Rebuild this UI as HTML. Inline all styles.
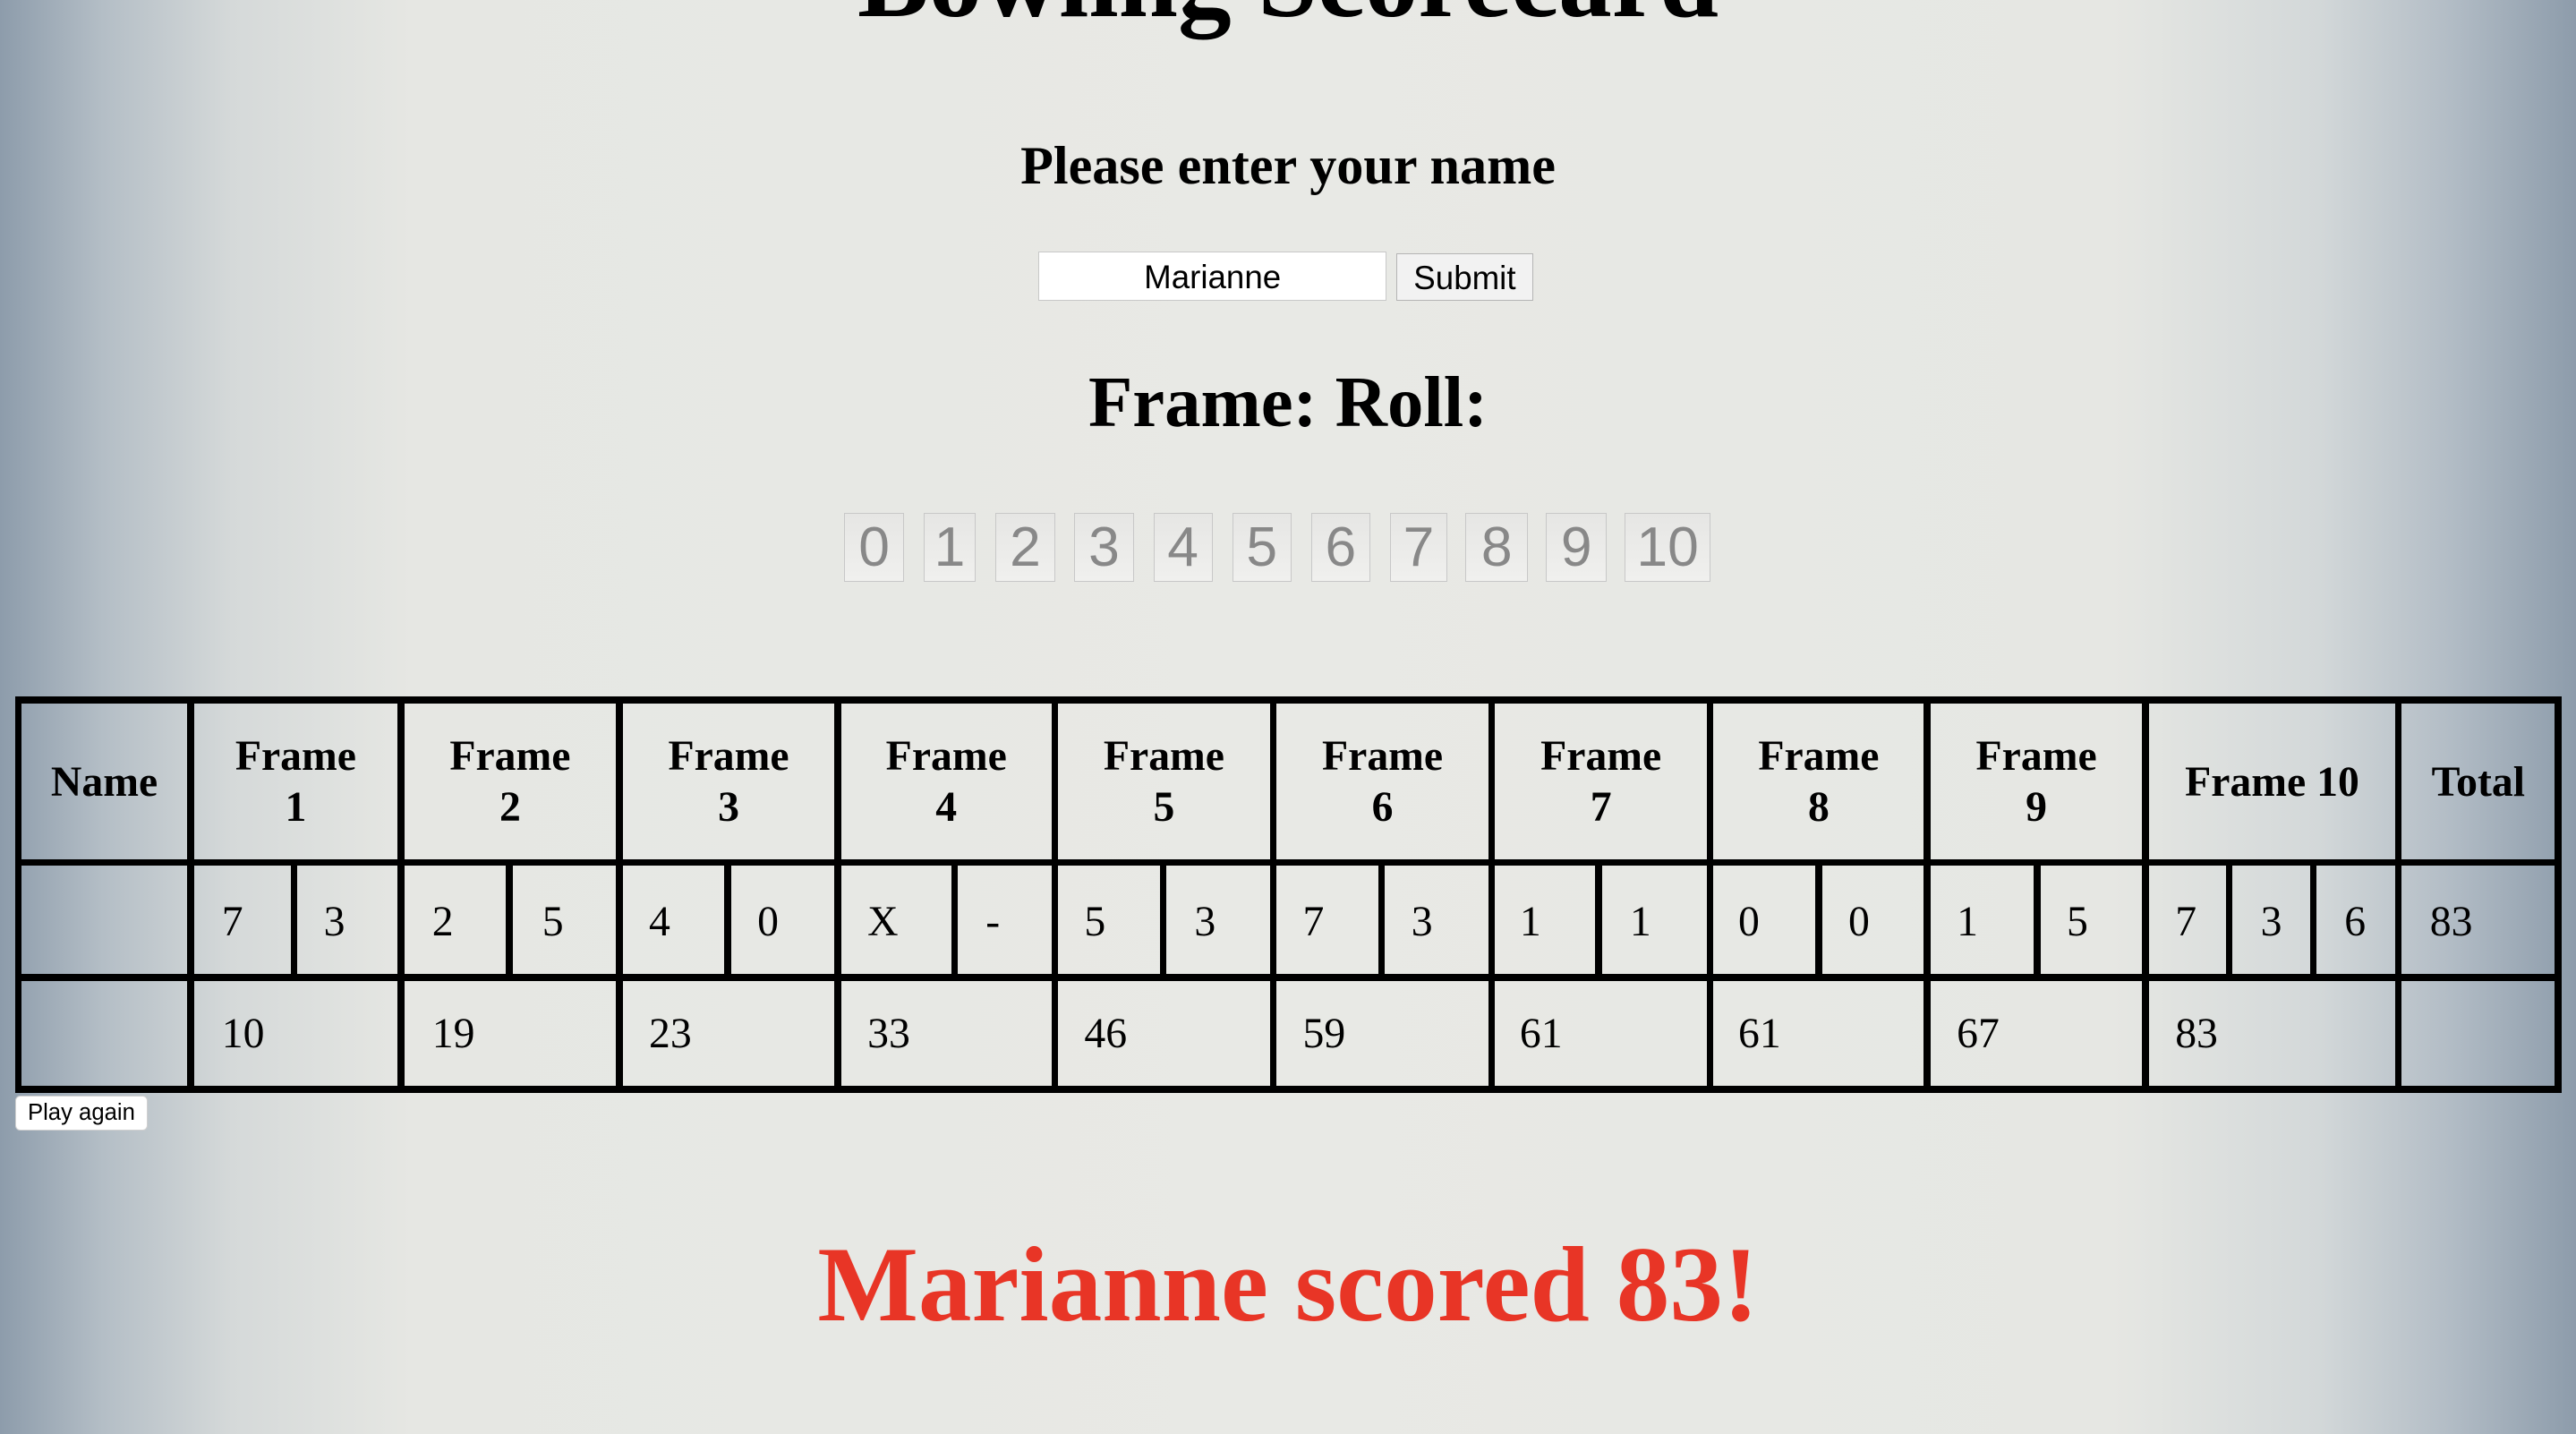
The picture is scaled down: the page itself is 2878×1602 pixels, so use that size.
<!DOCTYPE html>
<html><head><meta charset="utf-8"><style>
html,body{margin:0;padding:0;width:2878px;height:1602px;overflow:hidden}
body{background:
 linear-gradient(90deg,#8d9cab 0%,#b4bec6 4%,#d5d9d9 9%,#e6e7e3 16%,#e8e9e5 50%,#e6e7e3 82%,#d3d8d9 90%,#b3bdc6 95%,#8d9cab 100%);}
#w{zoom:1.8355;width:1568px;height:873px;position:relative;font-family:"Liberation Serif",serif;color:#000}
.a{position:absolute;white-space:nowrap}
.c{position:absolute;left:0;width:1568px;text-align:center;white-space:nowrap}
.h{position:absolute;background:#000}
.nb{position:absolute;top:312px;height:41px;border:1px solid #c8c8c8;background:linear-gradient(#e6e6e4,#f0f0ee);color:#888;font-family:"Liberation Sans",sans-serif;font-size:34px;line-height:41px;text-align:center}
.th{position:absolute;font-weight:bold;font-size:26px;line-height:31px;text-align:center}
.t{position:absolute;font-size:26px;line-height:30px}
</style></head><body><div id="w">
<div class="c" style="top:-48px;font-size:65px;font-weight:bold;line-height:72px">Bowling Scorecard</div>
<div class="c" style="top:82px;font-size:32.8px;font-weight:bold;line-height:38px">Please enter your name</div>
<div class="a" style="left:632px;top:153px;width:211px;height:29px;background:#fff;border:1px solid #c8c8c8;font-family:'Liberation Sans',sans-serif;font-size:20px;line-height:30px;text-align:center">Marianne</div>
<div class="a" style="left:850px;top:154px;width:82px;height:28px;background:#f2f2f2;border:1px solid #b4b4b4;font-family:'Liberation Sans',sans-serif;font-size:20px;line-height:29px;text-align:center">Submit</div>
<div class="c" style="top:219px;font-size:44px;font-weight:bold;line-height:52px">Frame: Roll:</div>
<div class="nb" style="left:514px;width:35px">0</div>
<div class="nb" style="left:562px;width:31px">1</div>
<div class="nb" style="left:606px;width:35px">2</div>
<div class="nb" style="left:654px;width:35px">3</div>
<div class="nb" style="left:702px;width:35px">4</div>
<div class="nb" style="left:750px;width:35px">5</div>
<div class="nb" style="left:798px;width:35px">6</div>
<div class="nb" style="left:846px;width:34px">7</div>
<div class="nb" style="left:892px;width:37px">8</div>
<div class="nb" style="left:941px;width:36px">9</div>
<div class="nb" style="left:989px;width:51px">10</div>

<div class="h" style="left:9px;top:424px;width:1550px;height:4px"></div>
<div class="h" style="left:9px;top:523px;width:1550px;height:4px"></div>
<div class="h" style="left:9px;top:593px;width:1550px;height:4px"></div>
<div class="h" style="left:9px;top:661px;width:1550px;height:4px"></div>
<div class="h" style="left:9px;top:424px;width:4px;height:241px"></div>
<div class="h" style="left:114px;top:424px;width:4px;height:241px"></div>
<div class="h" style="left:242px;top:424px;width:4px;height:241px"></div>
<div class="h" style="left:375px;top:424px;width:4px;height:241px"></div>
<div class="h" style="left:508px;top:424px;width:4px;height:241px"></div>
<div class="h" style="left:640px;top:424px;width:4px;height:241px"></div>
<div class="h" style="left:773px;top:424px;width:4px;height:241px"></div>
<div class="h" style="left:906px;top:424px;width:4px;height:241px"></div>
<div class="h" style="left:1039px;top:424px;width:4px;height:241px"></div>
<div class="h" style="left:1171px;top:424px;width:4px;height:241px"></div>
<div class="h" style="left:1304px;top:424px;width:4px;height:241px"></div>
<div class="h" style="left:1458px;top:424px;width:4px;height:241px"></div>
<div class="h" style="left:1555px;top:424px;width:4px;height:241px"></div>
<div class="h" style="left:177px;top:524px;width:4px;height:72px"></div>
<div class="h" style="left:308px;top:524px;width:4px;height:72px"></div>
<div class="h" style="left:441px;top:524px;width:4px;height:72px"></div>
<div class="h" style="left:579px;top:524px;width:4px;height:72px"></div>
<div class="h" style="left:706px;top:524px;width:4px;height:72px"></div>
<div class="h" style="left:839px;top:524px;width:4px;height:72px"></div>
<div class="h" style="left:971px;top:524px;width:4px;height:72px"></div>
<div class="h" style="left:1105px;top:524px;width:4px;height:72px"></div>
<div class="h" style="left:1238px;top:524px;width:4px;height:72px"></div>
<div class="h" style="left:1355px;top:524px;width:4px;height:72px"></div>
<div class="h" style="left:1406px;top:524px;width:4px;height:72px"></div>

<div class="th" style="left:13px;width:101px;top:461px">Name</div>
<div class="th" style="left:118px;width:124px;top:445px">Frame<br>1</div>
<div class="th" style="left:246px;width:129px;top:445px">Frame<br>2</div>
<div class="th" style="left:379px;width:129px;top:445px">Frame<br>3</div>
<div class="th" style="left:512px;width:128px;top:445px">Frame<br>4</div>
<div class="th" style="left:644px;width:129px;top:445px">Frame<br>5</div>
<div class="th" style="left:777px;width:129px;top:445px">Frame<br>6</div>
<div class="th" style="left:910px;width:129px;top:445px">Frame<br>7</div>
<div class="th" style="left:1043px;width:128px;top:445px">Frame<br>8</div>
<div class="th" style="left:1175px;width:129px;top:445px">Frame<br>9</div>
<div class="th" style="left:1308px;width:150px;top:461px">Frame 10</div>
<div class="th" style="left:1462px;width:93px;top:461px">Total</div>

<div class="t" style="left:135px;top:546px">7</div>
<div class="t" style="left:197px;top:546px">3</div>
<div class="t" style="left:263px;top:546px">2</div>
<div class="t" style="left:330px;top:546px">5</div>
<div class="t" style="left:395px;top:546px">4</div>
<div class="t" style="left:461px;top:546px">0</div>
<div class="t" style="left:528px;top:546px">X</div>
<div class="t" style="left:600px;top:546px">-</div>
<div class="t" style="left:660px;top:546px">5</div>
<div class="t" style="left:727px;top:546px">3</div>
<div class="t" style="left:793px;top:546px">7</div>
<div class="t" style="left:859px;top:546px">3</div>
<div class="t" style="left:925px;top:546px">1</div>
<div class="t" style="left:992px;top:546px">1</div>
<div class="t" style="left:1058px;top:546px">0</div>
<div class="t" style="left:1125px;top:546px">0</div>
<div class="t" style="left:1191px;top:546px">1</div>
<div class="t" style="left:1258px;top:546px">5</div>
<div class="t" style="left:1324px;top:546px">7</div>
<div class="t" style="left:1376px;top:546px">3</div>
<div class="t" style="left:1427px;top:546px">6</div>
<div class="t" style="left:1479px;top:546px">83</div>

<div class="t" style="left:135px;top:614px">10</div>
<div class="t" style="left:263px;top:614px">19</div>
<div class="t" style="left:395px;top:614px">23</div>
<div class="t" style="left:528px;top:614px">33</div>
<div class="t" style="left:660px;top:614px">46</div>
<div class="t" style="left:793px;top:614px">59</div>
<div class="t" style="left:925px;top:614px">61</div>
<div class="t" style="left:1058px;top:614px">61</div>
<div class="t" style="left:1191px;top:614px">67</div>
<div class="t" style="left:1324px;top:614px">83</div>

<div class="a" style="left:9px;top:667px;width:80px;height:20px;background:#fff;border:1px solid #d0d0d0;border-radius:3px;font-family:'Liberation Sans',sans-serif;font-size:14px;line-height:20px;text-align:center">Play again</div>

<div class="c" style="top:744px;font-size:65px;font-weight:bold;line-height:76px;color:#e83526">Marianne scored 83!</div>
</div></body></html>
